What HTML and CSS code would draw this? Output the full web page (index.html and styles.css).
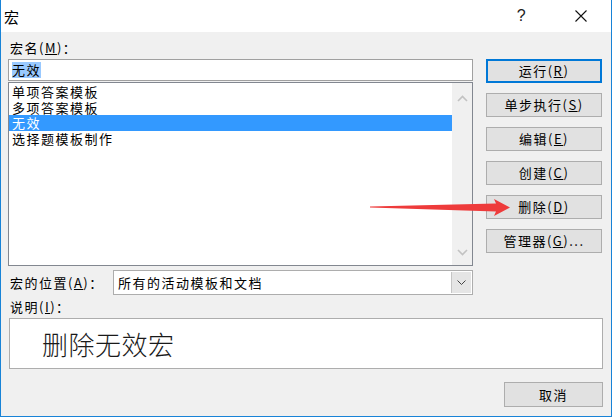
FILE: index.html
```html
<!DOCTYPE html>
<html lang="zh-CN">
<head>
    <meta charset="UTF-8">
    <title>宏</title>
    <link rel="stylesheet" href="styles.css">
</head>
<body>
    <div class="window">
        <div class="titlebar">
            <span class="title">宏</span>
            <span class="help">?</span>
            <span class="close">
                <svg width="12" height="12" viewBox="0 0 12 12"><path d="M0.5 0.5 L11.5 11.5 M11.5 0.5 L0.5 11.5" stroke="#111" stroke-width="1.1" fill="none"/></svg>
            </span>
        </div>

        <div class="content">
            <div class="top">
                <div class="left">
                    <div class="label">宏名(<u>M</u>)：</div>
                    <div class="name-input"><span class="sel">无效</span></div>
                    <div class="listbox">
                        <ul class="items">
                            <li>单项答案模板</li>
                            <li>多项答案模板</li>
                            <li class="selected">无效</li>
                            <li>选择题模板制作</li>
                        </ul>
                        <div class="scrollbar">
                            <svg width="11" height="7" viewBox="0 0 11 7"><path d="M1 6 L5.5 1.5 L10 6" stroke="#c2c2c2" stroke-width="1.6" fill="none"/></svg>
                            <svg width="11" height="7" viewBox="0 0 11 7"><path d="M1 1 L5.5 5.5 L10 1" stroke="#c2c2c2" stroke-width="1.6" fill="none"/></svg>
                        </div>
                    </div>
                    <div class="location">
                        <span class="label">宏的位置(<u>A</u>)：</span>
                        <div class="combo">
                            <span class="combo-text">所有的活动模板和文档</span>
                            <span class="combo-btn">
                                <svg width="9" height="5" viewBox="0 0 9 5"><path d="M0.5 0.5 L4.5 4.5 L8.5 0.5" stroke="#444" stroke-width="1" fill="none"/></svg>
                            </span>
                        </div>
                    </div>
                </div>

                <div class="buttons">
                    <button class="btn default">运行(<u>R</u>)</button>
                    <button class="btn">单步执行(<u>S</u>)</button>
                    <button class="btn">编辑(<u>E</u>)</button>
                    <button class="btn">创建(<u>C</u>)</button>
                    <button class="btn">删除(<u>D</u>)</button>
                    <button class="btn">管理器(<u>G</u>)...</button>
                </div>
            </div>

            <div class="label desc-label">说明(<u>I</u>)：</div>
            <div class="desc">删除无效宏</div>

            <div class="footer">
                <button class="btn cancel">取消</button>
            </div>
        </div>

        <!-- 红色箭头 -->
        <svg class="arrow" width="150" height="22" viewBox="0 0 150 22">
            <polygon points="0,7.5 126,4.5 124,0 140,8.5 124,17 126,12.5 0,8.5" fill="#ee3b3b"/>
        </svg>
    </div>
</body>
</html>
```

FILE: styles.css
```css
body {
    margin: 0;
    font-family: "Noto Sans CJK SC", "Liberation Sans", sans-serif;
    font-size: 13px;
    letter-spacing: 1.5px;
    color: #000;
    background: #f0f0f0;
}

.window {
    position: relative;
    width: 610px;
    height: 416px;
    border: 1px solid #1883d7;
    border-top: none;
    background: #f0f0f0;
    overflow: hidden;
}

.titlebar {
    height: 32px;
    background: #fff;
    display: flex;
    align-items: center;
}

.title {
    flex: 1;
    padding-left: 3px;
    font-size: 15px;
}

.help {
    width: 36px;
    text-align: center;
    font-family: "Liberation Sans", sans-serif;
    font-size: 16px;
    color: #222;
}

.close {
    width: 36px;
    margin-left: 23px;
    margin-right: 12px;
    display: flex;
    justify-content: center;
}

.content {
    padding: 8px 8px 0 7px;
}

.top {
    display: flex;
    gap: 13px;
}

.left {
    width: 465px;
}

.label {
    line-height: 16px;
    height: 16px;
    padding-left: 2px;
    margin-bottom: 3px;
    white-space: nowrap;
}

.label u,
.btn u {
    text-underline-offset: 1px;
}

.name-input {
    height: 20px;
    border: 1px solid #a0a0a0;
    background: #fff;
    padding: 0 3px;
    display: flex;
    align-items: center;
}

.sel {
    background: #99c9ff;
    line-height: 16px;
}

.listbox {
    margin-top: 1px;
    height: 182px;
    border: 1px solid #828790;
    background: #fff;
    display: flex;
}

.items {
    flex: 1;
    list-style: none;
    margin: 0;
    padding: 1px 0 0 0;
}

.items li {
    height: 15.5px;
    line-height: 15.5px;
    padding-left: 3px;
}

.items li.selected {
    background: #3399ff;
    color: #fff;
}

.scrollbar {
    width: 20px;
    background: #f0f0f0;
    display: flex;
    flex-direction: column;
    justify-content: space-between;
    align-items: center;
    padding: 12px 0 9px;
}

.location {
    margin-top: 4px;
    display: flex;
    align-items: center;
    justify-content: space-between;
}

.location .label {
    margin-bottom: 0;
}

.combo {
    width: 358px;
    height: 23px;
    border: 1px solid #adadad;
    background: #fff;
    display: flex;
    align-items: center;
}

.combo-text {
    flex: 1;
    padding-left: 4px;
}

.combo-btn {
    width: 19px;
    height: 21px;
    margin-right: 1px;
    background: #e5e5e5;
    border-left: 1px solid #c5c5c5;
    display: flex;
    align-items: center;
    justify-content: center;
}

.buttons {
    width: 116px;
    padding-top: 19px;
    display: flex;
    flex-direction: column;
    gap: 10px;
}

.btn {
    height: 24px;
    border: 1px solid #adadad;
    background: #e1e1e1;
    font-family: "Noto Sans CJK SC", "Liberation Sans", sans-serif;
    font-size: 13px;
    letter-spacing: 1.5px;
    color: #000;
    padding: 0;
    line-height: 20px;
}

.btn.default {
    border: 2px solid #0078d7;
}

.desc-label {
    margin-top: 4px;
}

.desc {
    height: 49px;
    margin-left: 1px;
    border: 1px solid #adadad;
    background: #fff;
    display: flex;
    align-items: center;
    padding-left: 32px;
    font-size: 26px;
    font-weight: 300;
    letter-spacing: 0.5px;
    color: #1a1a1a;
}

.footer {
    margin-top: 13px;
    display: flex;
    justify-content: flex-end;
}

.cancel {
    width: 99px;
    height: 25px;
}

.arrow {
    position: absolute;
    left: 369px;
    top: 199px;
}
```
